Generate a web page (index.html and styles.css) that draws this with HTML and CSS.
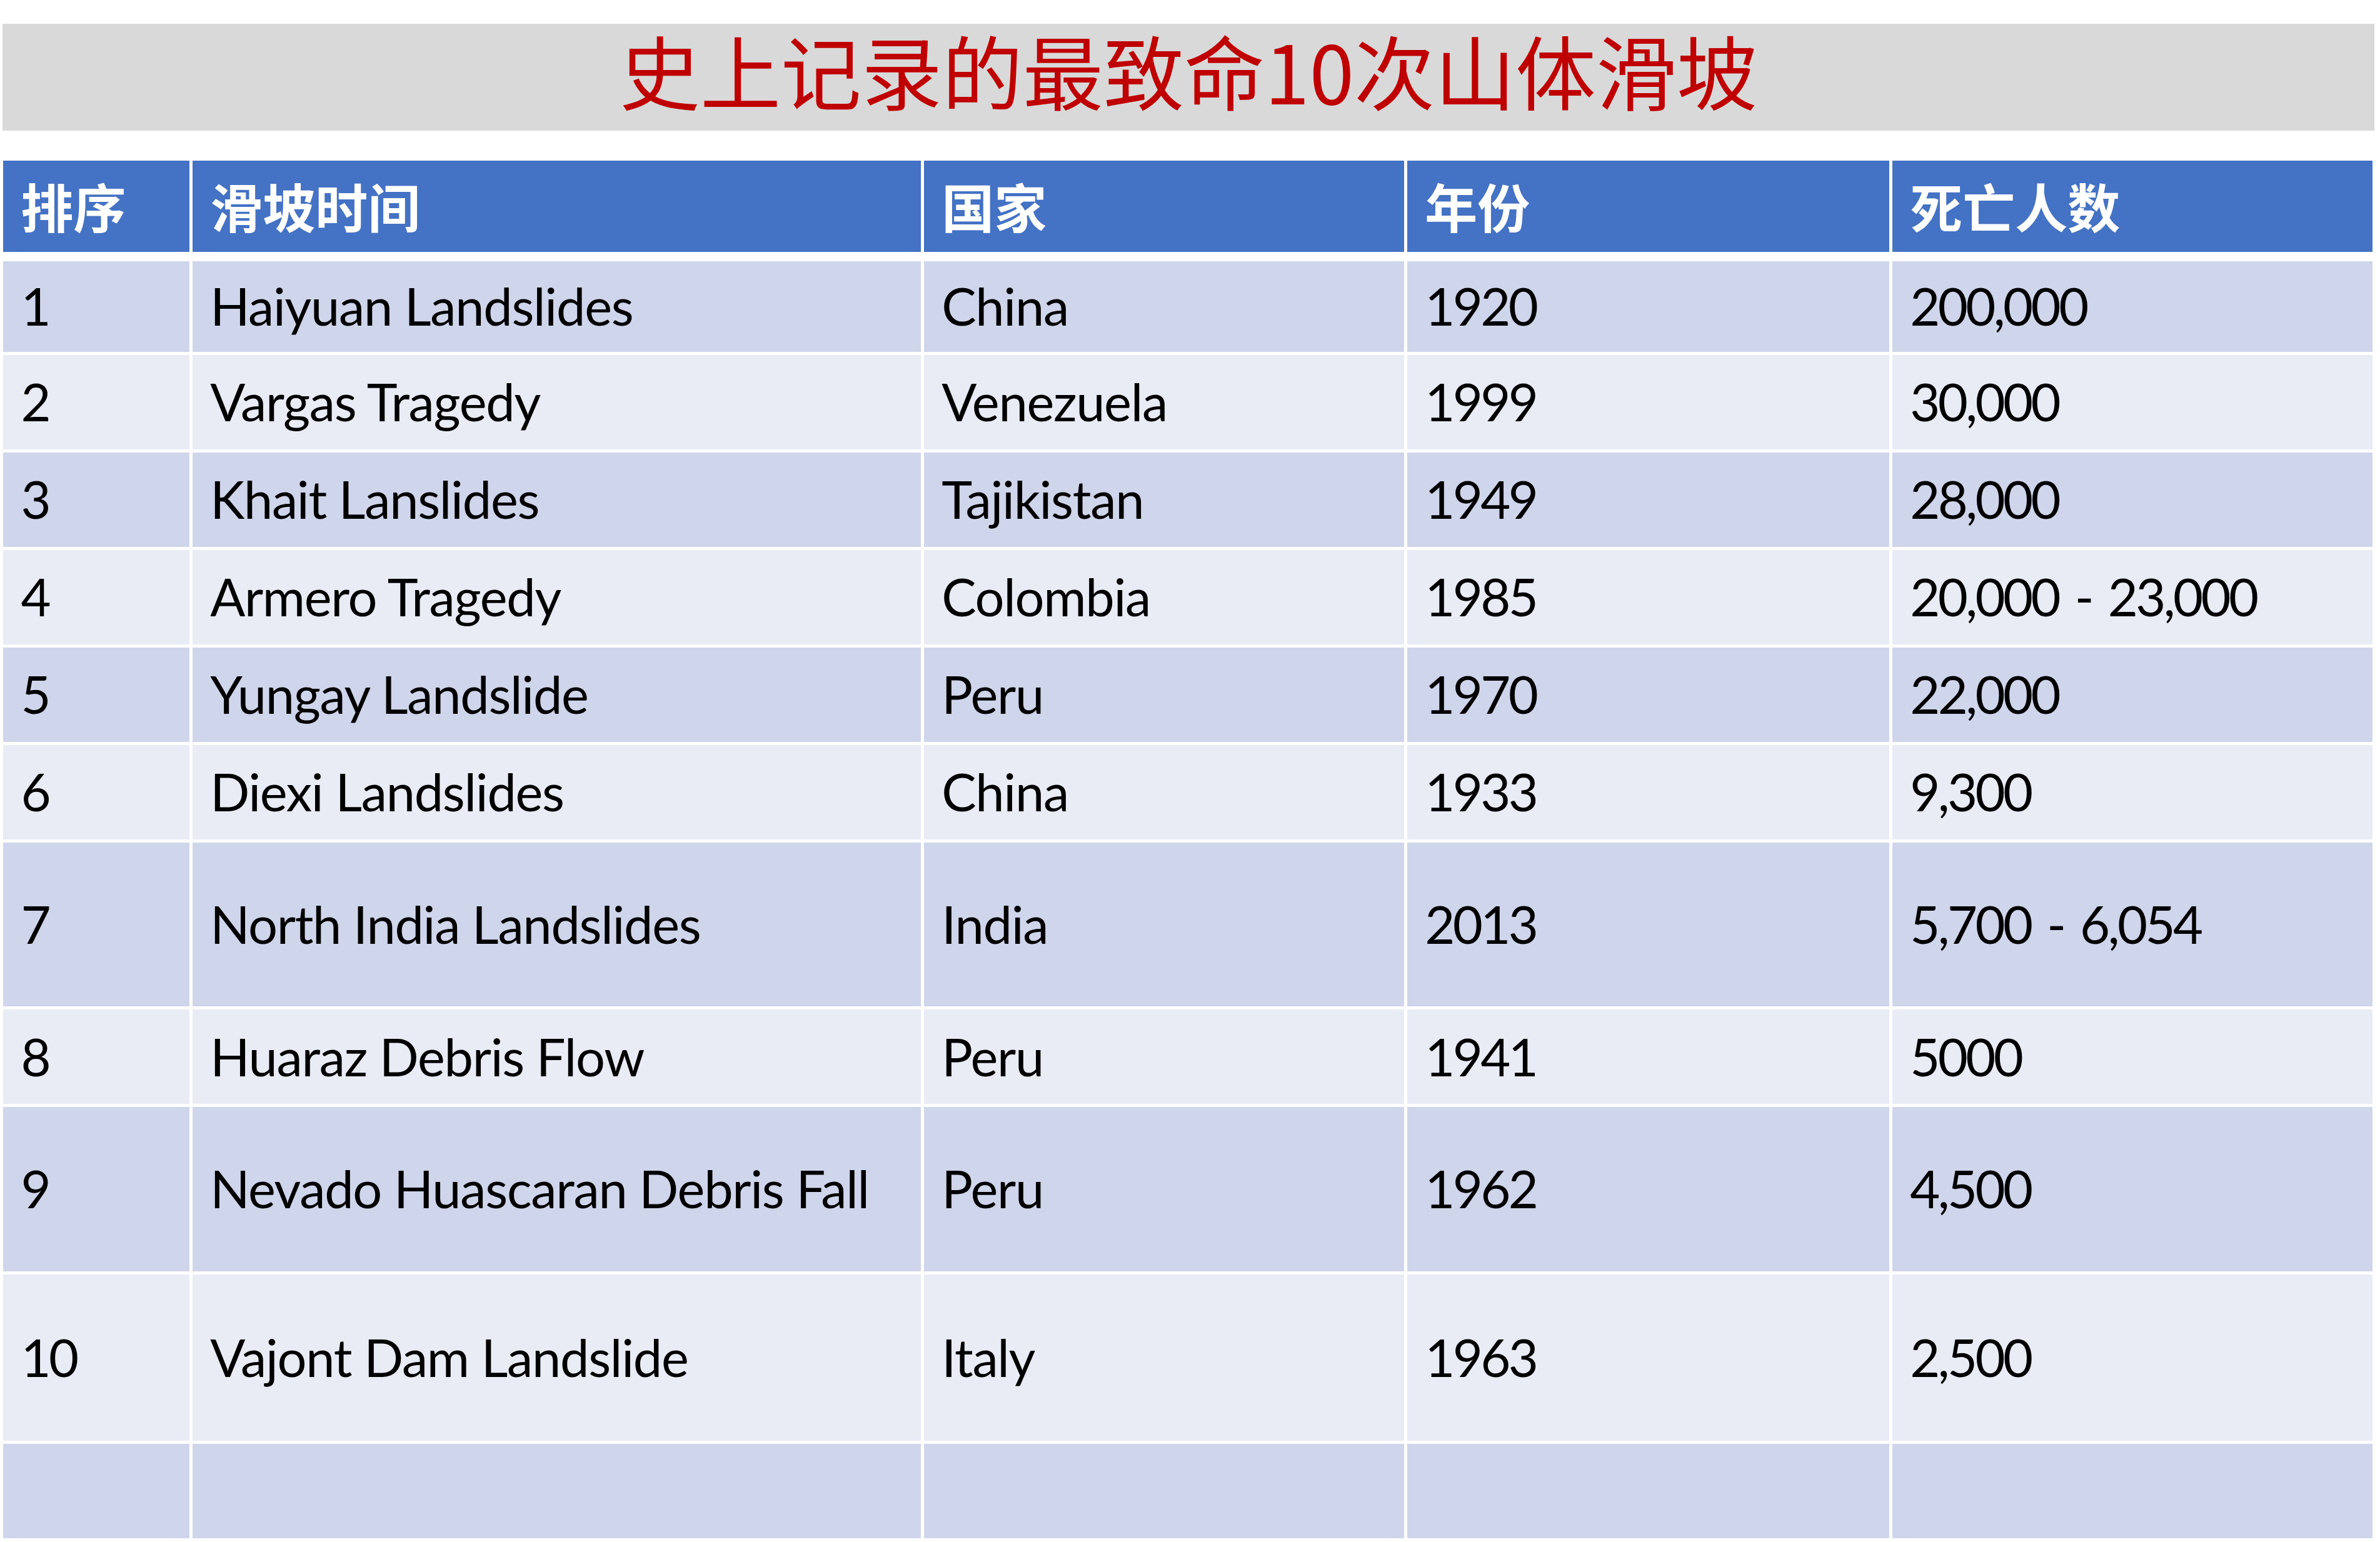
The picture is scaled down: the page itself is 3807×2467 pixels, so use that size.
FILE: index.html
```html
<!DOCTYPE html>
<html lang="zh-CN">
<head>
<meta charset="utf-8">
<title>史上记录的最致命10次山体滑坡</title>
<link rel="stylesheet" href="styles.css">
</head>
<body>
<div class="title-bar"><h1 class="title">史上记录的最致命10次山体滑坡</h1></div>
<div class="table">
  <div class="row head">
    <div class="cell">排序</div><div class="cell">滑坡时间</div><div class="cell">国家</div><div class="cell">年份</div><div class="cell">死亡人数</div>
  </div>
  <div class="row odd first">
    <div class="cell">1</div><div class="cell">Haiyuan Landslides</div><div class="cell">China</div><div class="cell">1920</div><div class="cell">200,000</div>
  </div>
  <div class="row even">
    <div class="cell">2</div><div class="cell">Vargas Tragedy</div><div class="cell">Venezuela</div><div class="cell">1999</div><div class="cell">30,000</div>
  </div>
  <div class="row odd">
    <div class="cell">3</div><div class="cell">Khait Lanslides</div><div class="cell">Tajikistan</div><div class="cell">1949</div><div class="cell">28,000</div>
  </div>
  <div class="row even">
    <div class="cell">4</div><div class="cell">Armero Tragedy</div><div class="cell">Colombia</div><div class="cell">1985</div><div class="cell">20,000 - 23,000</div>
  </div>
  <div class="row odd">
    <div class="cell">5</div><div class="cell">Yungay Landslide</div><div class="cell">Peru</div><div class="cell">1970</div><div class="cell">22,000</div>
  </div>
  <div class="row even">
    <div class="cell">6</div><div class="cell">Diexi Landslides</div><div class="cell">China</div><div class="cell">1933</div><div class="cell">9,300</div>
  </div>
  <div class="row odd tall">
    <div class="cell">7</div><div class="cell">North India Landslides</div><div class="cell">India</div><div class="cell">2013</div><div class="cell">5,700 - 6,054</div>
  </div>
  <div class="row even">
    <div class="cell">8</div><div class="cell">Huaraz Debris Flow</div><div class="cell">Peru</div><div class="cell">1941</div><div class="cell">5000</div>
  </div>
  <div class="row odd tall">
    <div class="cell">9</div><div class="cell">Nevado Huascaran Debris Fall</div><div class="cell">Peru</div><div class="cell">1962</div><div class="cell">4,500</div>
  </div>
  <div class="row even taller">
    <div class="cell">10</div><div class="cell">Vajont Dam Landslide</div><div class="cell">Italy</div><div class="cell">1963</div><div class="cell">2,500</div>
  </div>
  <div class="row odd">
    <div class="cell"></div><div class="cell"></div><div class="cell"></div><div class="cell"></div><div class="cell"></div>
  </div>
</div>
</body>
</html>
```

FILE: styles.css
```css
html, body {
  margin: 0;
  padding: 0;
  background: #ffffff;
}

body {
  width: 3807px;
  height: 2467px;
  overflow: hidden;
  font-family: "Lato", "Noto Sans CJK SC", sans-serif;
}

.title-bar {
  margin: 37.5px 0 0 4px;
  width: 3794px;
  height: 171px;
  box-sizing: border-box;
  padding-top: 8px;
  background: #d9d9d9;
}

.title {
  margin: 0;
  text-align: center;
  font-family: "Noto Sans CJK SC", sans-serif;
  font-weight: 400;
  font-size: 129px;
  line-height: 129px;
  color: #c00000;
}

.table {
  margin: 48px 0 0 5px;
  width: 3790px;
  display: flex;
  flex-direction: column;
  gap: 5px;
}

.row {
  display: grid;
  grid-template-columns: 297.7px 1165px 768px 771px 1fr;
  column-gap: 5px;
  height: 151px;
}

.row.head {
  height: 146px;
  margin-bottom: 10px;
}

.row.first { height: 145px; }
.row.tall { height: 262.5px; }
.row.taller { height: 266px; }

.cell {
  display: flex;
  align-items: center;
  padding: 0 28.5px;
  font-size: 83px;
  line-height: 1.2;
  letter-spacing: -1.3px;
  color: #000000;
  white-space: nowrap;
}

.cell:nth-child(1),
.cell:nth-child(4),
.cell:nth-child(5) {
  letter-spacing: -3.6px;
  word-spacing: 8px;
}

.head .cell {
  background: #4472c4;
  color: #ffffff;
  font-family: "Noto Sans CJK SC", sans-serif;
  font-weight: 700;
  font-size: 84px;
  letter-spacing: 0;
  word-spacing: 0;
  padding-top: 0;
}

.odd .cell { background: #cfd5ea; }
.even .cell { background: #e9ebf5; }
```
